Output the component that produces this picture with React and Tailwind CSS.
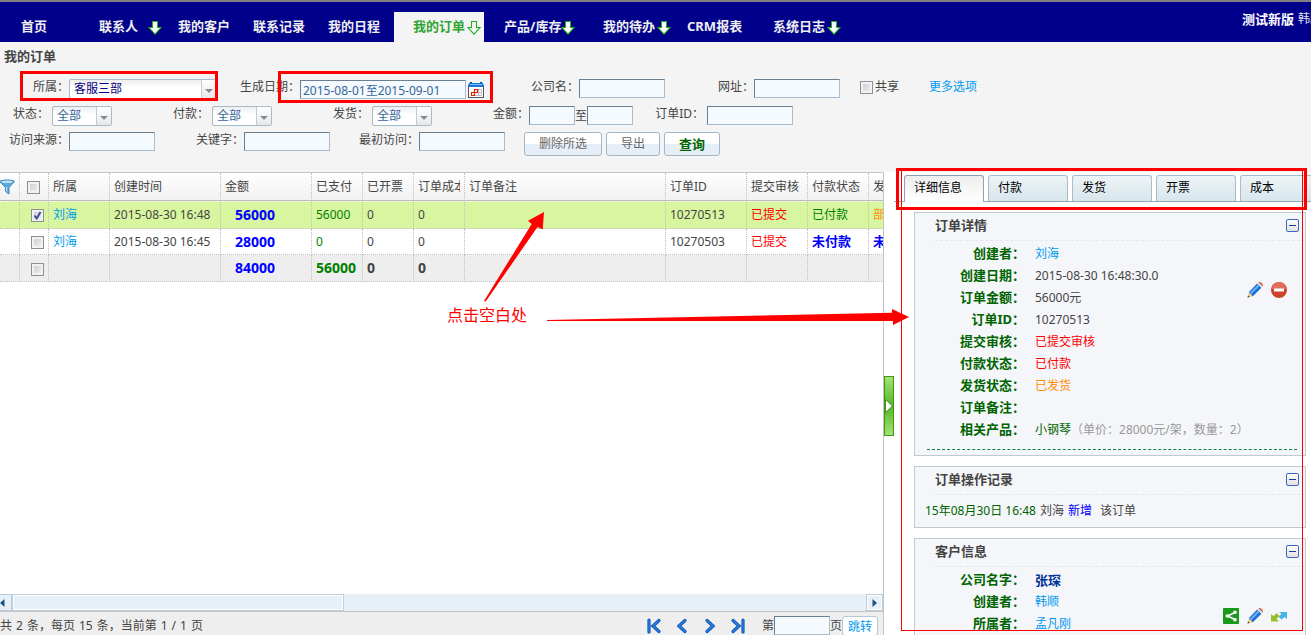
import React from 'react';

const navItems = [
  { label: '首页', width: 'w-[78px]' },
  { label: '联系人', width: 'w-[79px]', arrow: true, gap: 'gap-[10px]' },
  { label: '我的客户', width: 'w-[75px]' },
  { label: '联系记录', width: 'w-[75px]' },
  { label: '我的日程', width: 'w-[66px]' },
  { label: '我的订单', width: 'w-[110px]', arrow: true, gap: 'gap-[2px]', active: true },
  { label: '产品/库存', width: 'w-[99px]', arrow: true },
  { label: '我的待办', width: 'w-[84px]', arrow: true, gap: 'gap-[2px]' },
  { label: 'CRM报表', width: 'w-[86px]' },
  { label: '系统日志', width: 'w-[80px]', arrow: true, gap: 'gap-[2px]' },
];

const columns = [
  { label: '所属', width: 'w-[61px]' },
  { label: '创建时间', width: 'w-[111px]' },
  { label: '金额', width: 'w-[91px]' },
  { label: '已支付', width: 'w-[51px]' },
  { label: '已开票', width: 'w-[51px]' },
  { label: '订单成本', width: 'w-[51px]' },
  { label: '订单备注', width: 'w-[201px]' },
  { label: '订单ID', width: 'w-[81px]' },
  { label: '提交审核', width: 'w-[61px]' },
  { label: '付款状态', width: 'w-[61px]' },
  { label: '发货状态', width: 'w-[61px]' },
];

const orders = [
  {
    id: '10270513', owner: '刘海', created: '2015-08-30 16:48', amount: '56000', paid: '56000',
    pay: '已付款', payClass: 'text-[#008000]', ship: '部分发货', shipClass: 'text-[#ff8c00]',
    selected: true, rowClass: 'h-[28px] bg-[#d8f6a0]', cellClass: 'border-t border-t-white',
  },
  {
    id: '10270503', owner: '刘海', created: '2015-08-30 16:45', amount: '28000', paid: '0',
    pay: '未付款', payClass: 'pb-[2px] text-[13px] font-bold text-[#0000ff]', ship: '未发货', shipClass: 'pb-[2px] text-[13px] font-bold text-[#0000ff]',
    selected: false, rowClass: 'h-[26px] bg-white', cellClass: '',
  },
];

const tabs = ['详细信息', '付款', '发货', '开票', '成本'];

const DownArrow = ({ active }) => (
  <svg width="14" height="14" viewBox="0 0 14 14" className="mt-1 shrink-0">
    <path
      d="M4.5 0.5H9.5V6.5H13L7 13.2L1 6.5H4.5Z"
      fill={active ? '#f4f4f4' : '#ffffff'}
      stroke="#22aa22"
      strokeWidth="1.1"
    />
  </svg>
);

const Checkbox = ({ label, id, checked = false }) => (
  <span className="relative inline-block h-[13px] w-[13px] shrink-0 align-middle">
    <input
      type="checkbox"
      id={id}
      aria-label={label}
      defaultChecked={checked}
      className="peer block h-[13px] w-[13px] appearance-none border border-[#8e8f8f] bg-linear-to-br from-[#c5c9cf] to-[#f4f4f4] shadow-[inset_0_0_0_2px_#f2f2f2]"
    />
    <svg viewBox="0 0 13 13" className="pointer-events-none absolute inset-0 hidden h-[13px] w-[13px] peer-checked:block">
      <path d="M3.5 6.5L5.7 9.5L9.5 3" fill="none" stroke="#3b4f9f" strokeWidth="2" />
    </svg>
  </span>
);

const Label = ({ id, width, children }) => (
  <label htmlFor={id} className={`shrink-0 whitespace-nowrap text-right leading-4 ${width}`}>
    {children}
  </label>
);

const TextBox = ({ id, label, width = 'w-[86px]', ...rest }) => (
  <input
    id={id}
    aria-label={label}
    type="text"
    className={`h-[19px] shrink-0 border border-[#a9bccf] border-t-[#6b7f93] border-l-[#6b7f93] bg-[#f5faff] px-[2px] text-[#336699] outline-none ${width}`}
    {...rest}
  />
);

const SelectBox = ({ id, width, textColor, option }) => (
  <div className={`relative h-5 shrink-0 ${width}`}>
    <select
      id={id}
      className={`h-5 w-full appearance-none rounded-[2px] border border-[#a6bcc8] bg-linear-to-b from-[#eeeeee] to-white to-40% pl-1 leading-[18px] outline-none ${textColor}`}
    >
      <option>{option}</option>
    </select>
    <span className="pointer-events-none absolute top-px right-px flex h-[18px] w-[15px] items-center justify-center border-l border-[#c4ccd2] bg-linear-to-b from-white to-[#e6e8ea]">
      <svg width="8" height="4" viewBox="0 0 8 4" className="mt-1">
        <path d="M0 0H8L4 4Z" fill="#8a8a8a" />
      </svg>
    </span>
  </div>
);

const CalendarIcon = () => (
  <svg width="16" height="16" viewBox="0 0 16 16">
    <rect x="0.5" y="3.5" width="15" height="12" fill="#fff" stroke="#555" />
    <path d="M1 1H15L16 5H0Z" fill="#1d74d8" />
    <path d="M2 0.5H4M12 0.5H14" stroke="#0b3f8a" />
    <path d="M2 2.5H14" stroke="#6fc3ff" />
    <path d="M6.5 7.5H13.5V13.5H3.5V10.5H13.5M10.5 7.5V13.5" fill="none" stroke="#b9bfc7" />
    <path d="M6.5 10.5V7.5H9.5V10.5H3.5V13.5H6.5V10.5" fill="none" stroke="#e32200" strokeWidth="1.2" />
  </svg>
);

const FilterIcon = () => (
  <svg width="16" height="16" viewBox="0 0 16 16" className="-ml-px">
    <path d="M0.5 2.5C3 0.5 13 0.5 15.5 2.5L10 8.5V15L6.5 12.5V8.5Z" fill="#5aa7dc" stroke="#3a86bd" />
    <ellipse cx="8" cy="2.8" rx="6" ry="1.3" fill="#bfe0f5" />
    <path d="M7.7 8V12.5" stroke="#d7edfa" />
  </svg>
);

const PencilIcon = () => (
  <svg width="16" height="16" viewBox="0 0 16 16">
    <path d="M0.5 15.5L1.8 10.2L5.8 14.2Z" fill="#f3cf86" />
    <path d="M0.5 15.5L1.1 13.4L2.6 14.9Z" fill="#333" />
    <path d="M1.8 10.2L10.2 1.6L14.4 5.8L5.8 14.2Z" fill="#1c6bd0" />
    <path d="M2.7 11L11.1 2.5L12.5 3.9L4.1 12.4Z" fill="#6cb2f5" />
    <path d="M10.2 1.6L11.6 0.4L15.6 4.4L14.4 5.8Z" fill="#d7dde5" />
    <path d="M11.6 0.4C13.4 -0.9 17 2.4 15.6 4.4Z" fill="#e0604c" />
  </svg>
);

const RemoveIcon = () => (
  <svg width="16" height="16" viewBox="0 0 16 16">
    <circle cx="8" cy="8" r="8" fill="#cc432b" />
    <path d="M1 7A7 7 0 0 1 15 7Z" fill="#de705b" />
    <rect x="3" y="6.5" width="10" height="3" fill="#fff" />
  </svg>
);

const ShareIcon = () => (
  <svg width="16" height="16" viewBox="0 0 16 16">
    <rect width="16" height="16" rx="1" fill="#1a9a1a" />
    <path d="M12 4.5L4.5 8L12 11.5" fill="none" stroke="#fff" strokeWidth="1.5" />
    <circle cx="12" cy="4.3" r="1.8" fill="#fff" />
    <circle cx="4.3" cy="8" r="1.8" fill="#fff" />
    <circle cx="12" cy="11.7" r="1.8" fill="#fff" />
  </svg>
);

const TransferIcon = () => (
  <svg width="16" height="16" viewBox="0 0 16 16">
    <path d="M8 4H16V11L13.5 9L10.5 11.5L7.5 8.5L10.5 6Z" fill="#4ab4e6" />
    <path d="M0 6L2.5 8L5.5 5L8.5 8L5.5 11L8 13.5H0Z" fill="#9abf2c" />
  </svg>
);

const CollapseButton = () => (
  <button type="button" aria-label="收起" className="flex h-[13px] w-[13px] items-center justify-center rounded-[2px] border border-[#3f66c4] bg-linear-to-b from-white to-[#e2e2e2]">
    <span className="h-px w-[7px] bg-[#1f3a86]"></span>
  </button>
);

const pagerIcons = [
  { label: '首页', d: 'M3 2V14M13 2.5L7 8L13 13.5' },
  { label: '上一页', d: 'M11 2.5L5 8L11 13.5' },
  { label: '下一页', d: 'M5 2.5L11 8L5 13.5' },
  { label: '末页', d: 'M3 2.5L9 8L3 13.5M13 2V14' },
];

const PagerIcon = ({ d }) => (
  <svg width="16" height="16" viewBox="0 0 16 16" fill="none" strokeLinecap="round">
    <path d={d} stroke="#0a52b8" strokeWidth="3.2" />
    <path d={d} stroke="#2f86e4" strokeWidth="1.2" />
  </svg>
);

const Card = ({ title, children }) => (
  <section className="relative mr-[5px] ml-5 border border-[#c0cad4] bg-[#f5f6fa]">
    <div className="ml-5 flex h-7 items-start justify-between border-b border-dashed border-[#e3e6ea] pt-1 pr-[6px]">
      <h2 className="text-[13px] font-bold">{title}</h2>
      <div className="pt-[2px]"><CollapseButton /></div>
    </div>
    {children}
  </section>
);

const DetailRow = ({ label, children }) => (
  <div className="flex h-[22px] items-center">
    <dt className="w-[110px] shrink-0 pb-[2px] text-right text-[13px] font-bold text-[#006400]">{label}：</dt>
    <dd className="pl-[10px] whitespace-nowrap">{children}</dd>
  </div>
);

const linkClass = 'text-[#0099ee]';

const Header = () => (
  <header className="flex h-[42px] shrink-0 justify-between overflow-hidden border-t-2 border-[#808080] bg-[#00008b]">
    <nav className="pl-[21px]">
      <ul className="flex h-full items-end">
        {navItems.map((item) => (
          <li key={item.label} className={`shrink-0 ${item.width}`}>
            <a
              href="#"
              className={`flex h-[30px] items-center pb-[2px] text-[13px] font-bold whitespace-nowrap ${item.gap || ''} ${
                item.active ? 'w-[90px] bg-[#f4f4f4] pl-[19px] text-[#2fa52f]' : 'text-[#eeeeee]'
              }`}
            >
              {item.label}
              {item.arrow && <DownArrow active={item.active} />}
            </a>
          </li>
        ))}
      </ul>
    </nav>
    <div className="flex h-[34px] w-[69px] shrink-0 items-center gap-1 overflow-hidden whitespace-nowrap text-white">
      <strong className="text-[13px]">测试新版</strong>
      <span className="text-[#e0e0f0]">韩顺</span>
    </div>
  </header>
);

const buttonClass =
  'h-6 rounded-[3px] border border-[#a3b8c4] bg-linear-to-b from-white from-50% to-[#e6eef7] to-50%';

const SearchForm = () => (
  <form className="h-[130px] shrink-0 overflow-hidden" onSubmit={(e) => e.preventDefault()}>
    <h1 className="flex h-[37px] items-center pb-[10px] pl-1 text-[13px] font-bold">我的订单</h1>
    <div className="flex h-[27px] items-start">
      <Label id="dept" width="w-[69px]">所属：</Label>
      <SelectBox id="dept" width="w-[148px]" textColor="text-[#000080]" option="客服三部" />
      <Label id="date" width="w-[83px]">生成日期：</Label>
      <div className="flex items-center gap-[2px] pt-px">
        <TextBox id="date" width="w-[166px]" defaultValue="2015-08-01至2015-09-01" />
        <button type="button" aria-label="选择日期"><CalendarIcon /></button>
      </div>
      <Label id="company" width="w-[95px]">公司名：</Label>
      <TextBox id="company" />
      <Label id="site" width="w-[89px]">网址：</Label>
      <TextBox id="site" />
      <div className="flex h-4 items-center gap-[2px] pl-5">
        <Checkbox id="shared" />
        <label htmlFor="shared">共享</label>
      </div>
      <a href="#" className={`pl-[30px] leading-4 ${linkClass}`}>更多选项</a>
    </div>
    <div className="flex h-[26px] items-start">
      <Label id="status" width="w-[52px] pr-[3px]">状态：</Label>
      <SelectBox id="status" width="w-[60px]" textColor="text-[#336699]" option="全部" />
      <Label id="payment" width="w-[100px] pr-[3px]">付款：</Label>
      <SelectBox id="payment" width="w-[60px]" textColor="text-[#336699]" option="全部" />
      <Label id="delivery" width="w-[100px] pr-[3px]">发货：</Label>
      <SelectBox id="delivery" width="w-[60px]" textColor="text-[#336699]" option="全部" />
      <Label id="amountFrom" width="w-[97px]">金额：</Label>
      <TextBox id="amountFrom" width="w-[46px]" />
      <label htmlFor="amountTo" className="leading-5">至</label>
      <TextBox id="amountTo" width="w-[46px]" />
      <Label id="orderId" width="w-[74px] pr-[3px]">订单ID：</Label>
      <TextBox id="orderId" />
    </div>
    <div className="flex items-start">
      <Label id="source" width="w-[69px]">访问来源：</Label>
      <TextBox id="source" />
      <Label id="keyword" width="w-[89px]">关键字：</Label>
      <TextBox id="keyword" />
      <Label id="firstVisit" width="w-[89px]">最初访问：</Label>
      <TextBox id="firstVisit" />
      <div className="flex gap-1 pl-[19px]">
        <button type="button" className={`w-[78px] text-[#666666] ${buttonClass}`}>删除所选</button>
        <button type="button" className={`w-[54px] text-[#666666] ${buttonClass}`}>导出</button>
        <button type="submit" className={`w-14 text-[13px] font-bold text-[#006400] ${buttonClass}`}>查询</button>
      </div>
    </div>
  </form>
);

const cell = 'overflow-hidden border-r border-b border-dotted border-[#c0c0c0] pl-1 whitespace-nowrap';

const OrderTable = () => (
  <div className="flex-1 overflow-hidden">
    <table className="w-[930px] table-fixed border-separate border-spacing-0 text-left">
      <thead>
        <tr className="h-[28px] bg-linear-to-b from-white to-[#f0f0f0]">
          <th className="w-5 border-r border-b border-r-[#c0c0c0] border-b-[#bbbbbb] [border-right-style:dotted]"><FilterIcon /></th>
          <th className="w-[29px] border-r border-b border-r-[#c0c0c0] border-b-[#bbbbbb] pl-[7px] [border-right-style:dotted]"><Checkbox label="全选" /></th>
          {columns.map((col) => (
            <th
              key={col.label}
              className={`border-r border-b border-r-[#c0c0c0] border-b-[#bbbbbb] pr-1 pl-1 font-normal whitespace-nowrap [border-right-style:dotted] ${col.width}`}
            >
              <div className="overflow-hidden">{col.label}</div>
            </th>
          ))}
        </tr>
      </thead>
      <tbody>
        {orders.map((order) => (
          <tr key={order.id} className={order.rowClass}>
            <td className={`${cell} ${order.cellClass}`}></td>
            <td className={`${cell} ${order.cellClass} pl-[11px]`}><Checkbox label={order.id} checked={order.selected} /></td>
            <td className={`${cell} ${order.cellClass}`}><a href="#" className={linkClass}>{order.owner}</a></td>
            <td className={`${cell} ${order.cellClass}`}>{order.created}</td>
            <td className={`${cell} ${order.cellClass} pl-[14px] text-[14px] font-bold text-[#0000ff]`}>{order.amount}</td>
            <td className={`${cell} ${order.cellClass} text-[#008000]`}>{order.paid}</td>
            <td className={`${cell} ${order.cellClass}`}>0</td>
            <td className={`${cell} ${order.cellClass}`}>0</td>
            <td className={`${cell} ${order.cellClass}`}></td>
            <td className={`${cell} ${order.cellClass}`}>{order.id}</td>
            <td className={`${cell} ${order.cellClass} text-[#ff0000]`}>已提交</td>
            <td className={`${cell} ${order.cellClass} ${order.payClass}`}>{order.pay}</td>
            <td className={`${cell} ${order.cellClass} ${order.shipClass}`}>{order.ship}</td>
          </tr>
        ))}
        <tr className="h-[27px] bg-[#eeeeee] text-[14px] font-bold">
          <td className={cell}></td>
          <td className={`${cell} pl-[11px]`}><Checkbox label="合计" /></td>
          <td className={cell}></td>
          <td className={cell}></td>
          <td className={`${cell} pl-[14px] text-[#0000ff]`}>84000</td>
          <td className={`${cell} text-[#008000]`}>56000</td>
          <td className={cell}>0</td>
          <td className={cell}>0</td>
          <td className={cell}></td>
          <td className={cell}></td>
          <td className={cell}></td>
          <td className={cell}></td>
          <td className={cell}></td>
        </tr>
      </tbody>
    </table>
  </div>
);

const ScrollBar = () => (
  <div className="flex h-[17px] shrink-0 bg-[#e7eff7]">
    <button type="button" aria-label="向左" className="flex w-3 items-center border border-l-0 border-[#b9cfe0]">
      <svg width="5" height="8" viewBox="0 0 5 8"><path d="M4.5 0V8L0 4Z" fill="#1f4f86" /></svg>
    </button>
    <div className="w-[332px] border border-[#b9cfe0] shadow-[inset_0_0_0_1px_white]"></div>
    <button type="button" aria-label="向右" className="ml-auto flex w-[17px] items-center justify-center border border-[#b9cfe0] shadow-[inset_0_0_0_1px_white]">
      <svg width="5" height="8" viewBox="0 0 5 8"><path d="M0.5 0V8L5 4Z" fill="#1f4f86" /></svg>
    </button>
  </div>
);

const Pager = () => (
  <footer className="flex h-6 shrink-0 items-start justify-between border-t border-[#c4c4c4] bg-[#eeeeee]">
    <p className="flex gap-1 pt-[6px] leading-4">
      <span>共</span>
      <span>2</span>
      <span>条，每页</span>
      <span>15</span>
      <span>条，当前第</span>
      <span>1</span>
      <span>/</span>
      <span>1</span>
      <span>页</span>
    </p>
    <div className="flex items-start pr-[5px]">
      <div className="flex gap-3 pt-[6px] pr-4">
        {pagerIcons.map((icon) => (
          <button key={icon.label} type="button" aria-label={icon.label}><PagerIcon d={icon.d} /></button>
        ))}
      </div>
      <label htmlFor="page" className="pt-[6px] leading-4">第</label>
      <div className="pt-1"><TextBox id="page" width="w-14" /></div>
      <span className="pt-[6px] leading-4">页</span>
      <button type="button" className="mt-1 h-5 w-9 rounded-[3px] border border-[#b5c8d4] bg-white pt-px text-[#0099ee]">跳转</button>
    </div>
  </footer>
);

const DetailPanel = () => (
  <aside className="flex w-[427px] shrink-0 overflow-hidden bg-white">
    <button type="button" aria-label="折叠面板" className="mt-[204px] flex h-[60px] w-[10px] shrink-0 items-center justify-center border border-[#3c9a0a] bg-linear-to-b from-[#a5e07a] via-[#4fb81c] to-[#a5e07a]">
      <svg width="8" height="14" viewBox="0 0 8 14" className="shrink-0"><path d="M0.5 0.5L7.5 7L0.5 13.5Z" fill="#fff" stroke="#4c8c2a" /></svg>
    </button>
    <div className="min-w-0 flex-1">
      <div role="tablist" className="flex h-[30px] items-end gap-1 border-b border-[#98a9b6] pl-[10px]">
        {tabs.map((tab, index) => (
          <button
            key={tab}
            type="button"
            role="tab"
            aria-selected={index === 0}
            className={`w-20 shrink-0 rounded-t-[3px] border border-b-0 pb-[2px] pl-[9px] text-left text-black ${
              index === 0
                ? '-mb-px h-[27px] border-[#8fa1ae] bg-linear-to-b from-[#eeeeee] to-white'
                : 'h-[26px] border-[#a9bcc8] bg-linear-to-b from-[#eef4f6] to-[#d7e6ec]'
            }`}
          >
            {tab}
          </button>
        ))}
      </div>
      <div className="flex flex-col gap-[10px] pt-[10px]">
        <Card title="订单详情">
          <dl className="pt-[2px]">
            <DetailRow label="创建者"><a href="#" className={linkClass}>刘海</a></DetailRow>
            <DetailRow label="创建日期">2015-08-30 16:48:30.0</DetailRow>
            <DetailRow label="订单金额">56000元</DetailRow>
            <DetailRow label="订单ID">10270513</DetailRow>
            <DetailRow label="提交审核"><span className="text-[#ff0000]">已提交审核</span></DetailRow>
            <DetailRow label="付款状态"><span className="text-[#ff0000]">已付款</span></DetailRow>
            <DetailRow label="发货状态"><span className="text-[#ff8c00]">已发货</span></DetailRow>
            <DetailRow label="订单备注" />
            <DetailRow label="相关产品">
              <span className="text-[#006400]">小钢琴</span>
              <span className="text-[#999999]">（单价：28000元/架，数量：2）</span>
            </DetailRow>
          </dl>
          <div className="mr-2 mb-[5px] ml-3 pt-2">
            <div className="border-t border-dashed border-[#108050]"></div>
          </div>
          <div className="absolute top-[69px] right-[18px] flex gap-2">
            <button type="button" aria-label="编辑"><PencilIcon /></button>
            <button type="button" aria-label="删除"><RemoveIcon /></button>
          </div>
        </Card>
        <Card title="订单操作记录">
          <p className="flex h-8 items-center gap-1 pl-[10px]">
            <span className="text-[#006400]">15年08月30日 16:48</span>
            <span>刘海</span>
            <span className="text-[#0000ff]">新增</span>
            <span className="pl-1">该订单</span>
          </p>
        </Card>
        <Card title="客户信息">
          <dl className="h-[100px] pt-[2px]">
            <DetailRow label="公司名字"><b className="text-[13px] text-[#003399]">张琛</b></DetailRow>
            <DetailRow label="创建者"><a href="#" className={linkClass}>韩顺</a></DetailRow>
            <DetailRow label="所属者"><a href="#" className={linkClass}>孟凡刚</a></DetailRow>
          </dl>
          <div className="absolute top-[69px] right-[18px] flex gap-2">
            <button type="button" aria-label="共享"><ShareIcon /></button>
            <button type="button" aria-label="编辑"><PencilIcon /></button>
            <button type="button" aria-label="转移"><TransferIcon /></button>
          </div>
        </Card>
      </div>
    </div>
  </aside>
);

/* Red guide marks laid over the page */
const GuideMarks = () => (
  <div className="pointer-events-none absolute inset-0">
    <div className="absolute top-[71px] left-5 h-[30px] w-[198px] border-3 border-[#ff0000]"></div>
    <div className="absolute top-[71px] left-[278px] h-8 w-[215px] border-3 border-[#ff0000]"></div>
    <div className="absolute top-[168px] right-1 h-[42px] w-[411px] border-3 border-[#ff0000]"></div>
    <div className="absolute top-[170px] right-2 h-[461px] w-[402px] border border-[#ff0000]"></div>
    <svg width="440" height="130" viewBox="480 205 440 130" className="absolute top-[205px] left-[480px]" fill="#ff0000">
      <path d="M544 212L542.7 229.5L537.5 227L485.7 301.5L484 301L531.7 224L528 220.7Z" />
      <path d="M547 320L892 312.8V309L909 317L893 325V321H547Z" />
    </svg>
    <p className="absolute top-[305px] left-[447px] text-[16px] leading-5 text-[#ff0000]">点击空白处</p>
  </div>
);

const App = () => {
  return (
    <div className="relative flex h-screen flex-col overflow-hidden bg-[#f4f4f4] font-['Noto_Sans','Noto_Sans_CJK_SC',sans-serif] text-[12px] leading-4 text-[#444444]">
      <Header />
      <SearchForm />
      <div className="flex min-h-0 flex-1">
        <main className="flex min-w-0 flex-1 flex-col border-t border-r border-[#c4c4c4] bg-white">
          <OrderTable />
          <ScrollBar />
          <Pager />
        </main>
        <DetailPanel />
      </div>
      <GuideMarks />
    </div>
  );
};

export default App;
